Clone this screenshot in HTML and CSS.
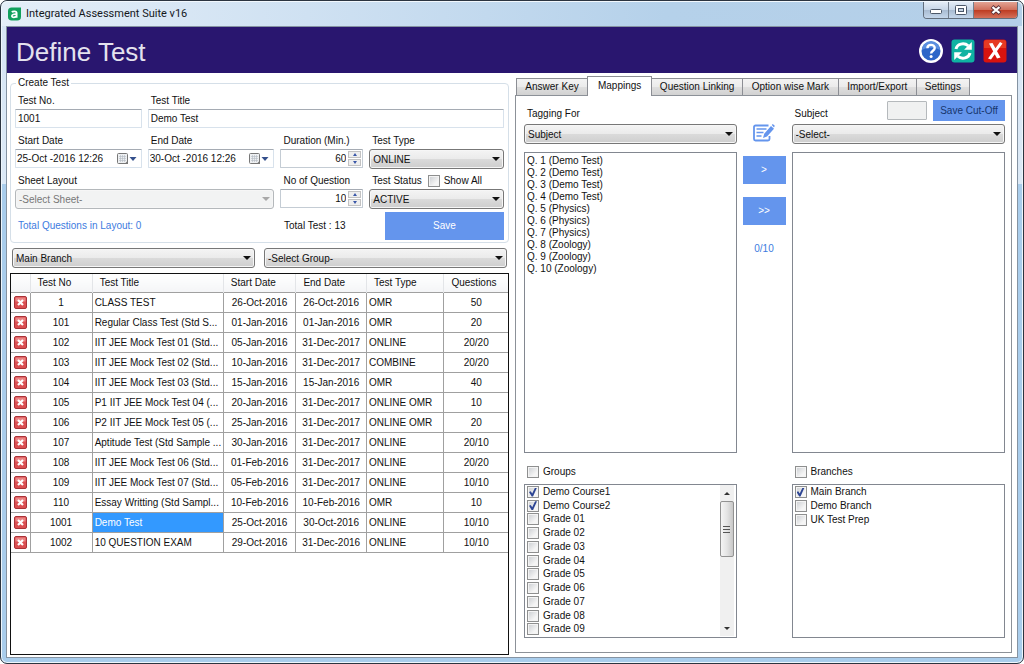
FILE: index.html
```html
<!DOCTYPE html>
<html lang="en">
<head>
<meta charset="utf-8">
<title>Integrated Assessment Suite v16</title>
<link rel="stylesheet" href="styles.css">
</head>
<body>
<div class="window">
  <header class="titlebar">
    <svg class="app-icon" viewBox="0 0 14 14"><path d="M4 0h10v10a4 4 0 0 1-4 4H4a4 4 0 0 1-4-4V4a4 4 0 0 1 4-4z" fill="#12a05c"/><path d="M4.2 5.2C5 3.9 9.3 3.700 9.300 6v5M9.300 7.300C6 7 4.200 7.600 4.200 9.100c0 2 4 2 5.100-.2" fill="none" stroke="#fff" stroke-width="1.900"/></svg>
    <span class="app-name">Integrated Assessment Suite v16</span>
    <div class="window-buttons">
      <button class="win-btn" aria-label="Minimize"><svg width="12" height="12" viewBox="0 0 12 12"><rect x="0.500" y="5.500" width="11" height="4" rx="1" fill="#fff" stroke="#4c5869"/></svg></button>
      <button class="win-btn" aria-label="Maximize"><svg width="12" height="12" viewBox="0 0 12 12"><rect x="0.500" y="1.500" width="11" height="9" rx="1" fill="#fff" stroke="#4c5869"/><rect x="3.500" y="4.500" width="5" height="3" fill="#c6d3e2" stroke="#4c5869"/></svg></button>
      <button class="win-btn win-close" aria-label="Close"><svg width="12" height="12" viewBox="0 0 12 12"><path d="M2 2.500l8 7M10 2.500l-8 7" stroke="#5b3038" stroke-width="4"/><path d="M2.500 3l7 6M9.500 3l-7 6" stroke="#fff" stroke-width="2.300"/></svg></button>
    </div>
  </header>
  <div class="client">
    <div class="banner">
      <h1>Define Test</h1>
      <div class="banner-actions">
        <button class="plain" aria-label="Help"><svg width="24" height="24" viewBox="0 0 24 24"><circle cx="12" cy="12" r="12" fill="#fff"/><circle cx="12" cy="12" r="9.500" fill="#2c65c8"/><path d="M3 11a9 9 0 0 1 18 0c-5-3-13-3-18 0z" fill="#5b8fe0"/><path d="M8.400 9.300C8.400 4.700 15.700 4.900 15.700 9c0 2.800-3.600 2.700-3.600 5.600" fill="none" stroke="#fff" stroke-width="2.400"/><circle cx="12.100" cy="17.600" r="1.500" fill="#fff"/></svg></button>
        <button class="plain" aria-label="Refresh"><svg width="24" height="24" viewBox="0 0 24 24"><rect x="0.500" y="0.500" width="23" height="23" rx="3" fill="#0fb3a2"/><path d="M5 10C6 4.800 13 3.200 17.300 6.800M19 14c-1 5.200-8 6.800-12.300 3.200" fill="none" stroke="#fff" stroke-width="3"/><path d="M20.800 3v7.700h-7.700zM3.200 21V13.300h7.700z" fill="#fff"/></svg></button>
        <button class="plain" aria-label="Exit"><svg width="24" height="24" viewBox="0 0 24 24"><rect x="0.500" y="0.500" width="23" height="23" rx="3" fill="#d8130e"/><path d="M1 9V3.500a2.500 2.500 0 0 1 2.500-2.500h17a2.500 2.500 0 0 1 2.500 2.500V9z" fill="#e63a22"/><path d="M6 4.500L9.500 4l8 14.500-3.500 1zM17 3l2.500 1.500L8 20.500l-3-1z" fill="#fff"/></svg></button>
      </div>
    </div>
    <main class="columns">
      <section class="left">
        <fieldset class="group">
          <legend>Create Test</legend>
          <div class="form-grid">
            <div class="field"><label for="no">Test No.</label><input id="no" class="text" value="1001"></div>
            <div class="field wide"><label for="title">Test Title</label><input id="title" class="text" value="Demo Test"></div>
            <div class="field"><label for="start">Start Date</label>
              <div class="box"><input id="start" value="25-Oct -2016 12:26"><button class="plain cal" aria-label="Pick start date"><svg width="20" height="12" viewBox="0 0 20 12"><rect x="0.500" y="0.500" width="10" height="10" rx="1" fill="#eef0f2" stroke="#777"/><path d="M2 3.500h7M2 5.500h7M2 7.500h7M3.500 2v7M5.500 2v7M7.500 2v7" stroke="#b4bac2" stroke-width=".6"/><path d="M7.500 11l3.500-3.500V11z" fill="#777"/><path d="M12.500 4h7L16 8z" fill="#35508c"/></svg></button></div></div>
            <div class="field"><label for="end">End Date</label>
              <div class="box"><input id="end" value="30-Oct -2016 12:26"><button class="plain cal" aria-label="Pick end date"><svg width="20" height="12" viewBox="0 0 20 12"><rect x="0.500" y="0.500" width="10" height="10" rx="1" fill="#eef0f2" stroke="#777"/><path d="M2 3.500h7M2 5.500h7M2 7.500h7M3.500 2v7M5.500 2v7M7.500 2v7" stroke="#b4bac2" stroke-width=".6"/><path d="M7.500 11l3.500-3.500V11z" fill="#777"/><path d="M12.500 4h7L16 8z" fill="#35508c"/></svg></button></div></div>
            <div class="field"><label for="dur">Duration (Min.)</label>
              <div class="box spin"><input id="dur" value="60"><div class="steps"><button class="up" aria-label="Increase duration"></button><button class="down" aria-label="Decrease duration"></button></div></div></div>
            <div class="field"><label for="type">Test Type</label><div class="combo"><select id="type"><option>ONLINE</option></select></div></div>
            <div class="field double"><label for="sheet">Sheet Layout</label><div class="combo off"><select id="sheet" disabled><option>-Select Sheet-</option></select></div></div>
            <div class="field"><label for="count">No of Question</label>
              <div class="box spin"><input id="count" value="10"><div class="steps"><button class="up" aria-label="Increase questions"></button><button class="down" aria-label="Decrease questions"></button></div></div></div>
            <div class="field"><div class="label-row"><label for="status">Test Status</label><label class="check"><input type="checkbox">Show All</label></div><div class="combo"><select id="status"><option>ACTIVE</option></select></div></div>
          </div>
          <div class="form-foot"><span class="layout-total">Total Questions in Layout: 0</span><span class="test-total">Total Test : 13</span><button class="blue save">Save</button></div>
        </fieldset>
        <div class="filters">
          <div class="combo"><select aria-label="Branch"><option>Main Branch</option></select></div>
          <div class="combo"><select aria-label="Group"><option>-Select Group-</option></select></div>
        </div>
        <div class="grid-box">
          <table>
            <colgroup><col class="c-del"><col class="c-no"><col class="c-title"><col class="c-start"><col class="c-end"><col class="c-type"><col class="c-q"></colgroup>
            <thead><tr><th></th><th>Test No</th><th>Test Title</th><th>Start Date</th><th>End Date</th><th>Test Type</th><th>Questions</th></tr></thead>
            <tbody id="rows"></tbody>
          </table>
        </div>
      </section>
      <section class="right">
        <div class="tabs" role="tablist">
          <button role="tab" class="tab t-key">Answer Key</button><button role="tab" class="tab t-map active" aria-selected="true">Mappings</button><button role="tab" class="tab t-link">Question Linking</button><button role="tab" class="tab t-mark">Option wise Mark</button><button role="tab" class="tab t-io">Import/Export</button><button role="tab" class="tab t-set">Settings</button>
        </div>
        <div class="panel" role="tabpanel">
          <div class="pane">
            <div class="pane-head"><label for="tagging">Tagging For</label></div>
            <div class="combo"><select id="tagging"><option>Subject</option></select></div>
            <select class="list" size="10" aria-label="Questions">
              <option>Q. 1 (Demo Test)</option><option>Q. 2 (Demo Test)</option><option>Q. 3 (Demo Test)</option><option>Q. 4 (Demo Test)</option><option>Q. 5 (Physics)</option><option>Q. 6 (Physics)</option><option>Q. 7 (Physics)</option><option>Q. 8 (Zoology)</option><option>Q. 9 (Zoology)</option><option>Q. 10 (Zoology)</option>
            </select>
            <label class="check all"><input type="checkbox">Groups</label>
            <div class="checklist">
              <ul class="fill">
                <li><label class="check"><input type="checkbox" checked>Demo Course1</label></li>
                <li><label class="check"><input type="checkbox" checked>Demo Course2</label></li>
                <li><label class="check"><input type="checkbox">Grade 01</label></li>
                <li><label class="check"><input type="checkbox">Grade 02</label></li>
                <li><label class="check"><input type="checkbox">Grade 03</label></li>
                <li><label class="check"><input type="checkbox">Grade 04</label></li>
                <li><label class="check"><input type="checkbox">Grade 05</label></li>
                <li><label class="check"><input type="checkbox">Grade 06</label></li>
                <li><label class="check"><input type="checkbox">Grade 07</label></li>
                <li><label class="check"><input type="checkbox">Grade 08</label></li>
                <li><label class="check"><input type="checkbox">Grade 09</label></li>
              </ul>
              <div class="scroll"><button class="arrow up" aria-label="Scroll up"></button><div class="thumb"><svg width="8" height="8" viewBox="0 0 8 8"><path d="M0 1.500h7M0 4.500h7M0 7.500h7" stroke="#555"/></svg></div><button class="arrow down" aria-label="Scroll down"></button></div>
            </div>
          </div>
          <div class="transfer">
            <button class="plain" aria-label="Edit"><svg width="22" height="20" viewBox="0 0 22 20"><path d="M15.500 2.500H2.500a1.500 1.500 0 0 0-1.500 1.500v12a1.500 1.500 0 0 0 1.500 1.500h12.500a1.500 1.500 0 0 0 1.500-1.500v-3" fill="none" stroke="#6495ed" stroke-width="1.800"/><path d="M3.500 6h10M3.500 9.500h7M3.500 13h5" stroke="#6495ed" stroke-width="1.500"/><path d="M10 15l1.200-4.200L18 3l3 2.700L14 13.500zM18.800 2l1-1 2 1.800-.8 1.700z" fill="#6495ed"/></svg></button>
            <button class="blue move">&gt;</button>
            <button class="blue move">&gt;&gt;</button>
            <span class="count">0/10</span>
          </div>
          <div class="pane">
            <div class="pane-head"><label for="subject">Subject</label><input class="cutoff" aria-label="Cut-off" disabled><button class="blue cut">Save Cut-Off</button></div>
            <div class="combo"><select id="subject"><option>-Select-</option></select></div>
            <select class="list" size="10" aria-label="Tagged questions"></select>
            <label class="check all"><input type="checkbox">Branches</label>
            <div class="checklist">
              <ul>
                <li><label class="check"><input type="checkbox" checked>Main Branch</label></li>
                <li><label class="check"><input type="checkbox">Demo Branch</label></li>
                <li><label class="check"><input type="checkbox">UK Test Prep</label></li>
              </ul>
            </div>
          </div>
        </div>
      </section>
    </main>
  </div>
</div>
<script src="tests.js"></script>
</body>
</html>
```
FILE: styles.css
```css
* { box-sizing: border-box; }
body, button, input, select { font-family: "Liberation Sans", Arial, sans-serif; font-size: 10px; line-height: 12px; color: #111; }
body { margin: 0; background: #fff; }
button, input, select { margin: 0; padding: 0; border: 0; border-radius: 0; outline: 0; }
h1, ul { margin: 0; padding: 0; }
ul { list-style: none; }
svg { display: block; }

.window { display: flex; flex-direction: column; min-height: 100vh; padding: 0 5px 5px; border: 1px solid #2b3440; border-radius: 7px; background: linear-gradient(#d6e5f4 0, #dce9f6 183px, #a9cdec 183px, #a9cdec 100%); box-shadow: inset 0 0 0 1px #eef6fc; }
.titlebar { display: flex; align-items: center; height: 25px; margin: 0 -4px; padding: 0 4px 0 6px; gap: 5px; background: linear-gradient(90deg, #e4eef8, #cfe1f2 30%, #b5d1ea 65%, #b4cfe8); border-radius: 6px 6px 0 0; border-top: 1px solid #f2f8fd; }
.app-icon { width: 13px; height: 14px; }
.app-name { flex: 1; font-family: Roboto, "Noto Sans", sans-serif; font-size: 11px; color: #15181c; }
.window-buttons { display: flex; align-self: flex-start; height: 17px; border: 1px solid #626e7c; border-top: 0; border-radius: 0 0 4px 4px; overflow: hidden; }
.win-btn { display: grid; place-items: center; width: 25px; background: linear-gradient(#e3ecf6, #c7d6e7 48%, #a8bbd1 50%, #c4d6ea); border-right: 1px solid #727e8c; }
.win-close { width: 43px; border: 0; background: linear-gradient(#e2a394, #d0705c 48%, #bd3a20 50%, #d4705a); }

.client { flex: 1; display: flex; flex-direction: column; background: #fff; border: 1px solid #8593a2; }
.banner { display: flex; align-items: center; justify-content: space-between; height: 46px; padding: 0 10px 0 9px; background: #29166f; }
.banner h1 { font-size: 26px; line-height: 30px; font-weight: 400; color: #e4e2ee; padding-top: 3px; }
.banner-actions { display: flex; gap: 8px; padding-top: 2px; }
.plain { background: none; }
.columns { flex: 1; display: flex; gap: 6px; padding: 0 5px 2px 3px; }
.left, .right { min-width: 0; display: flex; flex-direction: column; }
.left { flex: 499 1 0; padding-top: 4px; }
.right { flex: 497 1 0; padding: 3px 0 2px; }

.group { margin: 0; min-width: 0; padding: 6px 4px 2px; border: 1px solid #d5dfe8; border-radius: 4px; }
.group legend { margin-left: 1px; padding: 0 2px; }
.form-grid { display: grid; grid-template-columns: 127fr 127fr 83fr 135fr; gap: 6px; }
.field { display: flex; flex-direction: column; gap: 2px; min-width: 0; min-height: 34px; }
.field > label, .label-row { padding-left: 3px; }
.wide { grid-column: span 3; }
.double { grid-column: span 2; }
.label-row { display: flex; align-items: center; justify-content: space-between; height: 12px; padding-right: 22px; }
.text, .box { height: 19px; border: 1px solid #d8e2ec; border-top-color: #a5abb3; border-radius: 1px; background: #fff; }
.text { width: 100%; padding: 0 2px; }
.box { display: flex; align-items: center; padding-right: 4px; }
.box input { flex: 1; width: 0; min-width: 0; padding-left: 1px; background: none; }
.spin { padding-right: 1px; border-color: #a5abb3 #c4ccd4 #c4ccd4; }
.spin input { text-align: right; padding-right: 2px; }
.steps { display: flex; flex-direction: column; width: 13px; gap: 1px; }
.steps button { display: grid; place-items: center; height: 7px; background: #eee; border: 1px solid #c2c2c2; }
.steps button::after { content: ""; border: 2px solid transparent; }
.steps .up::after { border-top: 0; border-bottom: 3px solid #3a58a8; }
.steps .down::after { border-bottom: 0; border-top: 3px solid #3a58a8; }

.combo { position: relative; min-width: 0; }
.combo select { display: block; appearance: none; width: 100%; height: 20px; padding: 1px 16px 0 3px; border: 1px solid #777; border-radius: 3px; background: linear-gradient(#f4f4f4, #ebebeb 48%, #dadada 52%, #cecece); box-shadow: inset 0 0 0 1px #f6f6f6; }
.combo::after { content: ""; position: absolute; right: 4px; top: 8px; border: 4px solid transparent; border-top-color: #111; border-bottom: 0; pointer-events: none; }
.combo.off select { background: #f2f3f3; border-color: #b4b8bb; color: #777; opacity: 1; }
.combo.off::after { border-top-color: #a8a8a8; }

.check { display: flex; align-items: center; gap: 4px; }
.check input { appearance: none; flex: none; display: grid; place-items: center; width: 12px; height: 12px; border: 1px solid #8e8f8f; background: linear-gradient(135deg, #c9ccd0, #f5f5f5 70%); box-shadow: inset 0 0 0 1px #f4f4f4; }
.check input:checked::after { content: ""; width: 8px; height: 9px; background: #2d4594; clip-path: polygon(0 50%, 22% 42%, 40% 68%, 76% 0, 100% 0, 50% 100%, 34% 100%); }

.blue { background: #6495ed; color: #fff; text-align: center; }
.form-foot { display: grid; grid-template-columns: 266fr 101fr 119fr; align-items: center; margin-top: 3px; padding-left: 3px; }
.layout-total, .count { color: #3d7be0; }
.save { height: 28px; }
.filters { display: grid; grid-template-columns: 1fr 1fr; gap: 9px; padding: 5px 2px; }

.grid-box { flex: 1; border: 1px solid #111; background: #fff; }
table { width: 100%; table-layout: fixed; border-collapse: collapse; }
.c-del { width: 19px; }
.c-no { width: 12.5%; }
.c-title { width: 26.4%; }
.c-start { width: 14.6%; }
.c-end { width: 14.2%; }
.c-type { width: 15.6%; }
th, td { padding: 1px 2px 0; white-space: nowrap; overflow: hidden; text-align: center; }
th { height: 18px; font-weight: 400; text-align: left; padding-left: 7px; border-right: 1px solid #e3e5e8; background: linear-gradient(#fff, #f4f5f7); }
td { height: 20px; border: 1px solid #a0a0a0; }
td:first-child, th:first-child { border-left: 0; }
td:last-child, th:last-child { border-right: 0; }
td:nth-child(3), td:nth-child(6) { text-align: left; }
td:first-child { padding: 0; }
td.picked { background: #3399ff; color: #fff; }
td button { display: block; margin: 0 auto; }

.tabs { display: flex; align-items: flex-end; height: 19px; padding: 0 43px 0 1px; }
.tab { height: 17px; border: 1px solid #8c8e94; border-bottom: 0; margin-right: -1px; background: linear-gradient(#f3f3f3, #ebebeb 50%, #dedede 52%, #d2d2d2); white-space: nowrap; }
.tab.active { position: relative; height: 20px; margin-bottom: -1px; background: #fff; padding-bottom: 2px; }
.t-key { flex: 71; }
.t-map { flex: 64; }
.t-link { flex: 91; }
.t-mark { flex: 96; }
.t-io { flex: 78; }
.t-set { flex: 53; }
.panel { flex: 1; display: grid; grid-template-columns: minmax(0, 213fr) 43px minmax(0, 214fr); gap: 6px; padding: 4px 6px 14px 8px; border: 1px solid #8c9198; }
.pane { display: flex; flex-direction: column; }
.pane-head { display: flex; align-items: flex-end; height: 24px; }
.pane-head label { flex: 1; padding: 0 0 4px 3px; }
.cutoff { width: 40px; height: 19px; margin: 0 6px 4px 0; border: 1px solid #b5b9bc; border-radius: 1px; background: #f0f1f1; }
.cut { width: 72px; height: 21px; margin-bottom: 3px; color: #17366e; }
.list { flex: 1; width: 100%; min-height: 120px; margin-top: 8px; padding: 2px 0; border: 1px solid #828790; background: #fff; overflow: hidden; }
.list option { padding: 0 2px; min-height: 12px; line-height: 12px; }
.all { height: 31px; padding: 7px 0 0 3px; align-items: center; }
.checklist { display: flex; height: 154px; padding: 0 2px 1px; border: 1px solid #828790; }
.checklist ul { flex: 1; }
.fill { display: flex; flex-direction: column; }
.fill li { flex: 1 1 0; min-height: 0; }
.checklist .check { height: 14px; }
.scroll { display: flex; flex-direction: column; width: 14px; background: #f0f0f0; }
.arrow { display: grid; place-items: center; height: 16px; background: none; }
.arrow::after { content: ""; border: 3px solid transparent; }
.arrow.up::after { border-top: 0; border-bottom-color: #333; }
.arrow.down { margin-top: auto; }
.arrow.down::after { border-bottom: 0; border-top-color: #333; }
.thumb { display: grid; place-items: center; height: 56px; border: 1px solid #929292; border-radius: 2px; background: linear-gradient(90deg, #f5f5f5, #e4e4e4 50%, #c8c8c8); }
.transfer { display: flex; flex-direction: column; align-items: center; padding-top: 23px; gap: 13px; }
.move { width: 100%; height: 28px; }
.move + .count { margin-top: 5px; }
```
FILE: tests.js
```javascript
const tests = [
  ["1", "CLASS TEST", "26-Oct-2016", "26-Oct-2016", "OMR", "50"],
  ["101", "Regular Class Test (Std S...", "01-Jan-2016", "01-Jan-2016", "OMR", "20"],
  ["102", "IIT JEE Mock Test 01 (Std...", "05-Jan-2016", "31-Dec-2017", "ONLINE", "20/20"],
  ["103", "IIT JEE Mock Test 02 (Std...", "10-Jan-2016", "31-Dec-2017", "COMBINE", "20/20"],
  ["104", "IIT JEE Mock Test 03 (Std...", "15-Jan-2016", "15-Jan-2016", "OMR", "40"],
  ["105", "P1 IIT JEE Mock Test 04 (...", "20-Jan-2016", "31-Dec-2017", "ONLINE OMR", "10"],
  ["106", "P2 IIT JEE Mock Test 05 (...", "25-Jan-2016", "31-Dec-2017", "ONLINE OMR", "20"],
  ["107", "Aptitude Test (Std Sample ...", "30-Jan-2016", "31-Dec-2017", "ONLINE", "20/10"],
  ["108", "IIT JEE Mock Test 06 (Std...", "01-Feb-2016", "31-Dec-2017", "ONLINE", "20/20"],
  ["109", "IIT JEE Mock Test 07 (Std...", "05-Feb-2016", "31-Dec-2017", "ONLINE", "10/10"],
  ["110", "Essay Writting (Std Sampl...", "10-Feb-2016", "10-Feb-2016", "OMR", "10"],
  ["1001", "Demo Test", "25-Oct-2016", "30-Oct-2016", "ONLINE", "10/10"],
  ["1002", "10 QUESTION EXAM", "29-Oct-2016", "31-Dec-2016", "ONLINE", "10/10"]
];
const icon = '<svg width="13" height="13" viewBox="0 0 13 13"><rect x=".5" y=".5" width="12" height="12" rx="1.500" fill="#db4f51" stroke="#a93338"/><path d="M1.500 1.500h10v4h-10z" fill="#ea8584"/><path d="M4 4l5 5M9 4L4 9" stroke="#fff" stroke-width="2.200"/></svg>';
document.getElementById("rows").innerHTML = tests.map(t =>
  `<tr><td><button class="plain" aria-label="Delete test ${t[0]}">${icon}</button></td>` +
  t.map((v, i) => `<td${i === 1 && t[0] === "1001" ? ' class="picked"' : ""}>${v}</td>`).join("") + "</tr>").join("");
```
